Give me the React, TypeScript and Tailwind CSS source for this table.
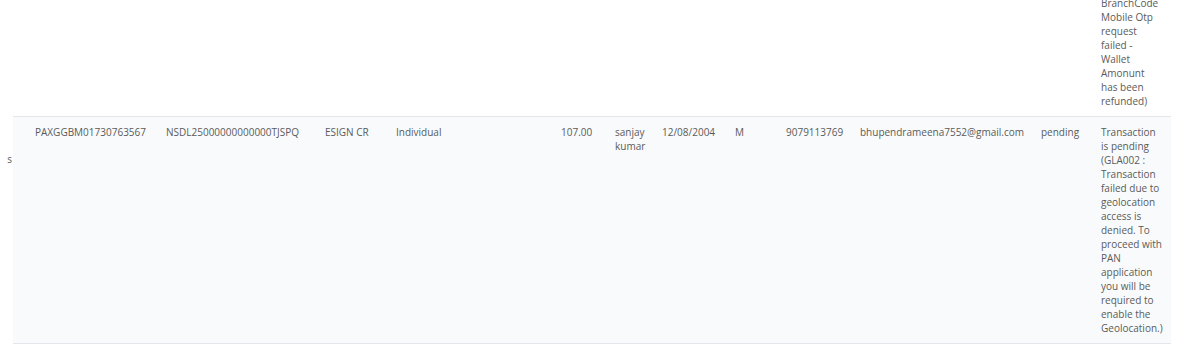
const cols = [143, 159, 71, 165, 54, 47, 73, 51, 74, 181, 60, 80];

type Row = {
  ackNo: string;
  txnId: string;
  type: string;
  category: string;
  amount: string;
  name: string;
  dob: string;
  gender: string;
  mobile: string;
  email: string;
  status: string;
  remark: string;
};

const rows: Row[] = [
  {
    ackNo: '',
    txnId: '',
    type: '',
    category: '',
    amount: '',
    name: '',
    dob: '',
    gender: '',
    mobile: '',
    email: '',
    status: '',
    remark: 'BranchCode Mobile Otp request failed - Wallet Amonunt has been refunded)',
  },
  {
    ackNo: 'PAXGGBM01730763567',
    txnId: 'NSDL25000000000000TJSPQ',
    type: 'ESIGN CR',
    category: 'Individual',
    amount: '107.00',
    name: 'sanjay kumar',
    dob: '12/08/2004',
    gender: 'M',
    mobile: '9079113769',
    email: 'bhupendrameena7552@gmail.com',
    status: 'pending',
    remark:
      'Transaction is pending (GLA002 : Transaction failed due to geolocation access is denied. To proceed with PAN application you will be required to enable the Geolocation.)',
  },
];

const App = () => {
  return (
    <div
      className="h-[349px] w-[1191px] overflow-hidden bg-white text-[10px] leading-[14px] text-[#5a5a5a]"
      style={{ fontFamily: '"Open Sans", "Liberation Sans", sans-serif' }}
    >
      <div className="flex -mt-[12px]">
        {/* clipped column on the left */}
        <div className="w-[13px] shrink-0 overflow-hidden">
          <div className="h-[128px]" />
          <div className="pt-[8px] text-right pr-[1px]">
            <div>&nbsp;</div>
            <div>&nbsp;</div>
            <div>s</div>
          </div>
        </div>

        <table className="table-fixed border-collapse w-[1158px]">
          <colgroup>
            {cols.map((w, i) => (
              <col key={i} style={{ width: w }} />
            ))}
          </colgroup>
          <tbody>
            {rows.map((r, i) => (
              <tr
                key={i}
                className={`align-top border-b border-[#e3e6ea] ${i % 2 === 1 ? 'bg-[#f9fafc]' : 'bg-white'}`}
              >
                <td className="pl-[22px] pr-[10px] py-2">{r.ackNo}</td>
                <td className="px-[10px] py-2">{r.txnId}</td>
                <td className="px-[10px] py-2">{r.type}</td>
                <td className="px-[10px] py-2">{r.category}</td>
                <td className="px-[10px] py-2">{r.amount}</td>
                <td className="px-[10px] py-2">{r.name}</td>
                <td className="px-[10px] py-2">{r.dob}</td>
                <td className="px-[10px] py-2">{r.gender}</td>
                <td className="px-[10px] py-2">{r.mobile}</td>
                <td className="px-[10px] py-2">{r.email}</td>
                <td className="px-[10px] py-2">{r.status}</td>
                <td className="pl-[10px] pr-[8px] py-2">{r.remark}</td>
              </tr>
            ))}
          </tbody>
        </table>
      </div>
    </div>
  );
};

export default App;
